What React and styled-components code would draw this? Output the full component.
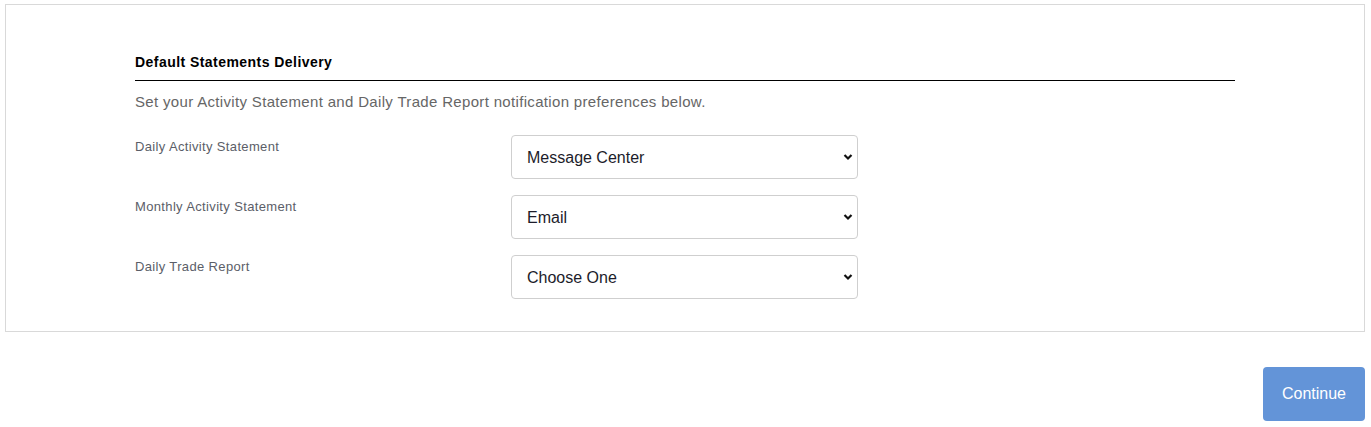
import React, { useState } from "react";
import styled, { createGlobalStyle } from "styled-components";

const GlobalStyle = createGlobalStyle`
  html, body {
    margin: 0;
    padding: 0;
    background: #fff;
  }
  body {
    font-family: "Liberation Sans", Arial, sans-serif;
  }
`;

const Page = styled.div`
  padding: 4px 6px 0 5px;
`;

const Panel = styled.section`
  border: 1px solid #d9d9d9;
  padding: 47px 0 32px;
`;

const Inner = styled.div`
  width: 1100px;
  margin: 0 auto;
`;

const Title = styled.h3`
  margin: 0;
  padding-bottom: 8px;
  border-bottom: 1px solid #000;
  font-size: 14px;
  line-height: 20px;
  font-weight: 700;
  letter-spacing: 0.45px;
  color: #000;
`;

const Intro = styled.p`
  margin: 10px 0 22px;
  font-size: 15px;
  line-height: 22px;
  letter-spacing: 0.33px;
  color: #666;
`;

const Form = styled.div`
  display: grid;
  grid-template-columns: 376px 347px;
  row-gap: 16px;
`;

const Label = styled.label`
  padding-top: 2px;
  font-size: 13px;
  line-height: 20px;
  letter-spacing: 0.35px;
  color: #5b5e68;
`;

const SelectWrap = styled.div`
  position: relative;
  height: 44px;
`;

const Select = styled.select`
  appearance: none;
  -webkit-appearance: none;
  width: 100%;
  height: 44px;
  box-sizing: border-box;
  padding: 0 30px 0 15px;
  border: 1px solid #cfcfcf;
  border-radius: 4px;
  background: #fff;
  font-family: "Liberation Sans", Arial, sans-serif;
  font-size: 16px;
  color: #1c1c2a;
  outline: none;
`;

const Chevron = styled.svg`
  position: absolute;
  right: 5px;
  top: 18px;
  width: 10px;
  height: 8px;
  pointer-events: none;
`;

const Footer = styled.div`
  display: flex;
  justify-content: flex-end;
  padding-top: 35px;
`;

const Button = styled.button`
  width: 102px;
  height: 54px;
  border: 0;
  border-radius: 4px;
  background: #6394d8;
  color: #fff;
  font-family: "Liberation Sans", Arial, sans-serif;
  font-size: 16px;
  cursor: pointer;
`;

const fields = [
  { id: "daily", label: "Daily Activity Statement", value: "message" },
  { id: "monthly", label: "Monthly Activity Statement", value: "email" },
  { id: "trade", label: "Daily Trade Report", value: "" },
];

function Field({ id, label, initial }) {
  const [value, setValue] = useState(initial);
  return (
    <>
      <Label htmlFor={id}>{label}</Label>
      <SelectWrap>
        <Select id={id} value={value} onChange={(e) => setValue(e.target.value)}>
          <option value="">Choose One</option>
          <option value="message">Message Center</option>
          <option value="email">Email</option>
        </Select>
        <Chevron viewBox="0 0 10 8">
          <path d="M1.5 2 L5 5.5 L8.5 2" fill="none" stroke="#111" strokeWidth="2.2" />
        </Chevron>
      </SelectWrap>
    </>
  );
}

export default function App() {
  return (
    <>
      <GlobalStyle />
      <Page>
        <Panel>
          <Inner>
            <Title>Default Statements Delivery</Title>
            <Intro>Set your Activity Statement and Daily Trade Report notification preferences below.</Intro>
            <Form>
              {fields.map((f) => (
                <Field key={f.id} id={f.id} label={f.label} initial={f.value} />
              ))}
            </Form>
          </Inner>
        </Panel>
        <Footer>
          <Button type="button">Continue</Button>
        </Footer>
      </Page>
    </>
  );
}
